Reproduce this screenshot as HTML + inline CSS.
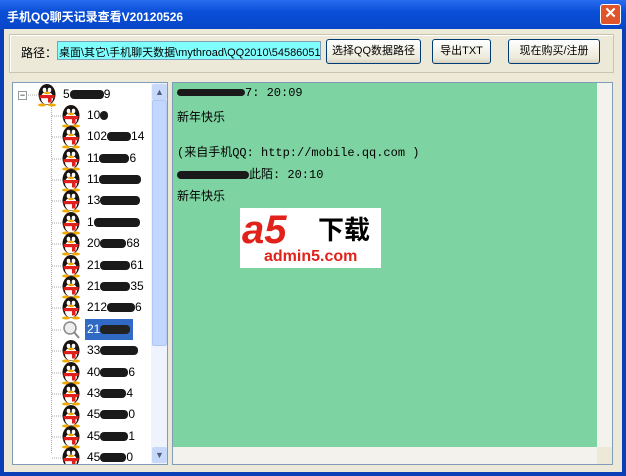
<!DOCTYPE html>
<html><head><meta charset="utf-8"><style>
*{margin:0;padding:0;box-sizing:border-box}
body{width:626px;height:476px;background:#0a3fb8;font-family:"Liberation Sans","Noto Sans CJK SC",sans-serif;font-size:12px;position:relative;overflow:hidden}
.title{position:absolute;left:0;top:0;width:626px;height:29px;background:linear-gradient(#2a6cf0,#0a4fd8 40%,#0846c8);color:#fff;font-weight:bold;font-size:12px;padding:8px 0 0 7px}
.close{position:absolute;right:5px;top:4px;width:21px;height:21px;background:#e0542c;border:1px solid #fff;border-radius:3px;color:#fff;font-size:15px;text-align:center;line-height:18px;font-weight:bold}
.client{position:absolute;left:4px;top:29px;width:618px;height:443px;background:#ece9d8}
.grp{position:absolute;left:5px;top:5px;width:605px;height:39px;border:1px solid #c8c4b0;box-shadow:inset 1px 1px #fff}
.lbl{position:absolute;left:17px;top:15px;font-size:12px}
.inp{position:absolute;left:53px;top:12px;width:264px;height:19px;background:#80ffff;border:1px solid #7f9db9;font-size:11px;padding:2px 1px;white-space:nowrap;overflow:hidden;font-family:"Liberation Sans","Noto Sans CJK SC",sans-serif}
.btn{position:absolute;top:10px;height:25px;background:linear-gradient(#fff,#ece9d8 80%,#d6d0c0);border:1px solid #003c74;border-radius:3px;font-size:11px;text-align:center;line-height:23px}
.tree{position:absolute;left:8px;top:53px;width:156px;height:383px;background:#fff;border:1px solid #7f9db9}
.vs{position:absolute;background:#eef3fd}
.thumb{position:absolute;background:#c3d6fd;border:1px solid #b0c8f5;border-radius:2px}
.arr{position:absolute;width:15px;height:16px;background:#c8d8fb;border-radius:2px;color:#4d6185;font-size:9px;text-align:center;line-height:16px}
.row{position:absolute;height:21px;font-size:12px;line-height:21px}
.blk{display:inline-block;height:9px;background:#1a1a1a;border-radius:4px;vertical-align:middle}
.chat{position:absolute;left:168px;top:53px;width:441px;height:383px;border:1px solid #7f9db9;background:#ece9d8}
.green{position:absolute;left:0;top:0;width:424px;height:364px;background:#7ed3a2;font-family:"Liberation Mono","Noto Sans CJK SC",monospace;font-size:12px;padding-left:4px}
.green div{position:absolute;left:4px;white-space:nowrap}
</style></head><body>
<div class="title">手机QQ聊天记录查看V20120526<div class="close">✕</div></div>
<div class="client">
<div class="grp"></div>
<div class="lbl">路径：</div>
<div class="inp">桌面\其它\手机聊天数据\mythroad\QQ2010\545860519\</div>
<div class="btn" style="left:322px;width:95px">选择QQ数据路径</div>
<div class="btn" style="left:428px;width:59px">导出TXT</div>
<div class="btn" style="left:504px;width:92px">现在购买/注册</div>

<div class="tree">
<div style="position:absolute;left:5px;top:8px;width:9px;height:9px;border:1px solid #919b9c;font-size:9px;line-height:6px;text-align:center">−</div>
<div style="position:absolute;left:38px;top:22px;height:348px;border-left:1px dotted #aaa"></div>
<svg style="position:absolute;left:0;top:0" width="140" height="381">
<defs><g id="p"><line x1="-9" y1="11" x2="0" y2="11" stroke="#aaa" stroke-dasharray="1 1"/><ellipse cx="10" cy="10.5" rx="8.5" ry="10.5" fill="#1a1410"/><ellipse cx="10" cy="14" rx="6" ry="6.5" fill="#fff"/><ellipse cx="7.5" cy="6" rx="1.8" ry="2.2" fill="#fff"/><ellipse cx="12.5" cy="6" rx="1.8" ry="2.2" fill="#fff"/><ellipse cx="10" cy="9" rx="3" ry="1.3" fill="#f2a900"/><rect x="2.5" y="11" width="15" height="3.2" fill="#e0201c"/><rect x="11" y="12.5" width="3.5" height="6" fill="#e0201c"/><ellipse cx="5" cy="21" rx="4" ry="1.5" fill="#f2a900"/><ellipse cx="15" cy="21" rx="4" ry="1.5" fill="#f2a900"/></g></defs>
<use href="#p" x="24" y="1"/>
<use href="#p" x="48" y="22"/><use href="#p" x="48" y="43"/><use href="#p" x="48" y="65"/><use href="#p" x="48" y="86"/><use href="#p" x="48" y="107"/><use href="#p" x="48" y="129"/><use href="#p" x="48" y="150"/><use href="#p" x="48" y="172"/><use href="#p" x="48" y="193"/><use href="#p" x="48" y="214"/>
<line x1="39" y1="247" x2="48" y2="247" stroke="#aaa" stroke-dasharray="1 1"/>
<circle cx="57" cy="245" r="6" fill="#eee" stroke="#888" stroke-width="1.5"/><line x1="61" y1="249" x2="66" y2="255" stroke="#888" stroke-width="2"/>
<use href="#p" x="48" y="257"/><use href="#p" x="48" y="279"/><use href="#p" x="48" y="300"/><use href="#p" x="48" y="322"/><use href="#p" x="48" y="343"/><use href="#p" x="48" y="364"/>
</svg>
<div class="row" style="left:50px;top:1px">5<span class="blk" style="width:34px"></span>9</div>
<div class="row" style="left:74px;top:22px">10<span class="blk" style="width:8px"></span></div>
<div class="row" style="left:74px;top:43px">102<span class="blk" style="width:24px"></span>14</div>
<div class="row" style="left:74px;top:65px">11<span class="blk" style="width:30px"></span>6</div>
<div class="row" style="left:74px;top:86px">11<span class="blk" style="width:42px"></span></div>
<div class="row" style="left:74px;top:107px">13<span class="blk" style="width:40px"></span></div>
<div class="row" style="left:74px;top:129px">1<span class="blk" style="width:46px"></span></div>
<div class="row" style="left:74px;top:150px">20<span class="blk" style="width:26px"></span>68</div>
<div class="row" style="left:74px;top:172px">21<span class="blk" style="width:30px"></span>61</div>
<div class="row" style="left:74px;top:193px">21<span class="blk" style="width:30px"></span>35</div>
<div class="row" style="left:74px;top:214px">212<span class="blk" style="width:28px"></span>6</div>
<div class="row" style="left:72px;top:236px;width:48px;background:#316ac5;color:#fff;padding-left:2px">21<span class="blk" style="width:30px;background:#222"></span></div>
<div class="row" style="left:74px;top:257px">33<span class="blk" style="width:38px"></span></div>
<div class="row" style="left:74px;top:279px">40<span class="blk" style="width:28px"></span>6</div>
<div class="row" style="left:74px;top:300px">43<span class="blk" style="width:26px"></span>4</div>
<div class="row" style="left:74px;top:321px">45<span class="blk" style="width:28px"></span>0</div>
<div class="row" style="left:74px;top:343px">45<span class="blk" style="width:28px"></span>1</div>
<div class="row" style="left:74px;top:364px">45<span class="blk" style="width:26px"></span>0</div>
<div class="vs" style="left:138px;top:0;width:16px;height:381px"></div>
<div class="arr" style="left:139px;top:1px">▲</div>
<div class="thumb" style="left:139px;top:17px;width:15px;height:246px"></div>
<div class="arr" style="left:139px;top:364px">▼</div>
</div>

<div class="chat">
<div class="green">
<div style="top:3px"><span class="blk" style="width:68px;height:7px"></span>7: 20:09</div>
<div style="top:25px">新年快乐</div>
<div style="top:60px">(来自手机QQ: http://mobile.qq.com )</div>
<div style="top:82px"><span class="blk" style="width:72px;height:8px"></span>此陌: 20:10</div>
<div style="top:104px">新年快乐</div>
<div style="left:67px;top:125px;width:141px;height:60px;background:#fff;font-family:'Liberation Sans',sans-serif">
<div style="left:2px;top:2px;font-size:40px;font-weight:bold;font-style:italic;color:#e0221a;line-height:40px">a<span style="color:#e0221a">5</span></div>
<div style="left:78px;top:6px;font-size:26px;font-weight:bold;color:#000;font-family:'Noto Sans CJK SC',sans-serif;line-height:30px">下载</div>
<div style="left:24px;top:40px;font-size:16px;font-weight:bold;color:#e0221a;line-height:18px">admin5.com</div>
</div>
</div>
<div style="position:absolute;left:424px;top:0;width:15px;height:364px;background:#f3f2ec"></div>
<div style="position:absolute;left:0;top:364px;width:424px;height:17px;background:#f3f2ec"></div>
</div>
</div>
</body></html>
